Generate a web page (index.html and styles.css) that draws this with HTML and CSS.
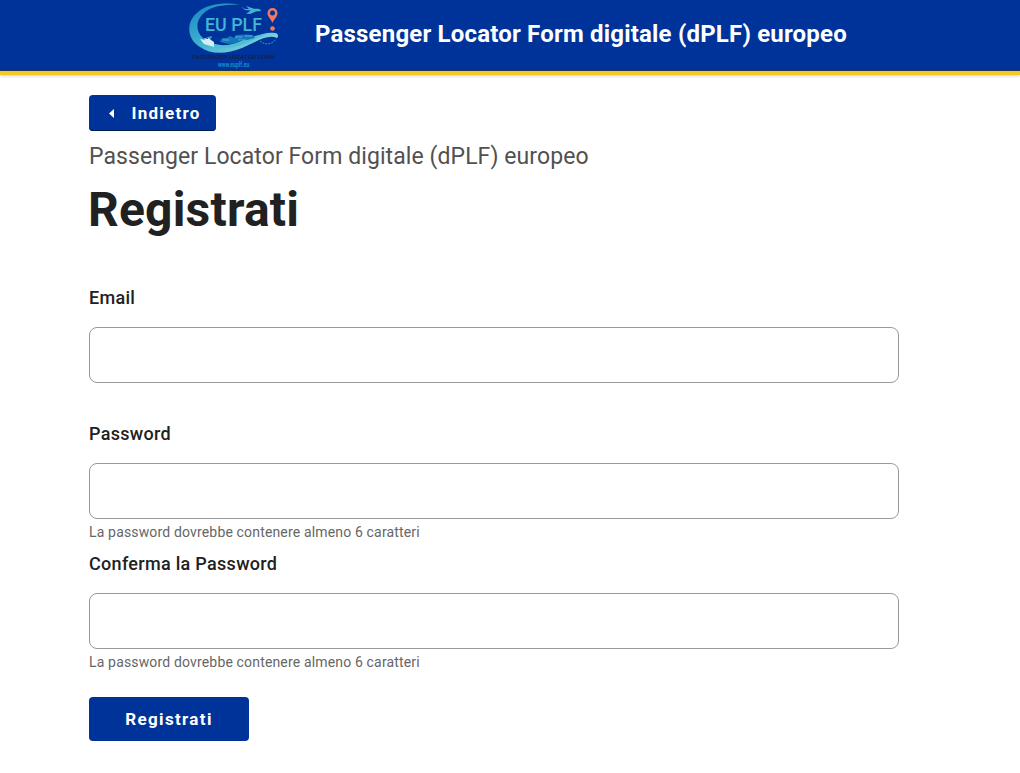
FILE: index.html
```html
<!DOCTYPE html>
<html lang="it">
<head>
<meta charset="utf-8">
<title>Registrati</title>
<link rel="stylesheet" href="styles.css">
</head>
<body>
<header class="topbar">
  <svg class="logo" viewBox="0 0 110 70" role="img" aria-label="EU PLF">
    <defs>
      <linearGradient id="wave" x1="0" y1="0" x2="1" y2="1">
        <stop offset="0" stop-color="#1583c5"/>
        <stop offset=".5" stop-color="#43b5cf"/>
        <stop offset="1" stop-color="#9de0ea"/>
      </linearGradient>
    </defs>
    <path d="M60 4.500C45 2.500 28 3.500 18 12C6 21 6 39 20 47C31 55 47 54 62 48C78 41 88 34 97 38C99 36 98 33 95 33C84 31 74 38 61 43C48 47 32 46 23 38C14 30 16 17 28 10C37 5 48 4.500 60 4.500Z" fill="url(#wave)"/>
    <path d="M22 42C32 48 46 47 61 41C71 36 82 34 88 34C79 36 73 41 64 44C48 50 31 50 22 42Z" fill="#50bfd5"/>
    <path d="M20 39L25 40L24 38L28 39L28 37L31 40L34 42L34 47L24 44Z" fill="#d5edf4"/>
    <path d="M26 37.500L32 36L31 39Z" fill="#389fcb"/>
    <path d="M40 42L42 38L47 38L50 36L54 38L56 35L66 34.500L73 35L75 38L67 40L60 40L57 43L49 44Z" fill="#1677bc"/>
    <path d="M43 40H49M55 37H62M65 36H72M58 40H66" stroke="#48b3d1" stroke-width="1.200" fill="none"/>
    <path d="M61 6.500L65 10L71 10.500L66 13.500L70 14L76 11.500L81 11C81 8.500 77 8.500 74 8.800L66 6L69 9L65 9Z" fill="#43b5d0"/>
    <path d="M80 41C85 46 93 44 96 39" stroke="#269fcd" stroke-width="1" stroke-dasharray="2 1" fill="none"/>
    <path d="M92.500 23C91 19 87.500 17 87.500 13A5 5 0 0 1 97.500 13C97.500 17 94 19 92.500 23ZM92.500 10.500A2.500 2.500 0 1 0 92.500 15.500A2.500 2.500 0 1 0 92.500 10.500Z" fill="#f17861" fill-rule="evenodd"/>
    <circle cx="92.500" cy="28.500" r="2.300" fill="#f17861"/>
    <text class="logo-name" x="25" y="31" textLength="57" lengthAdjust="spacingAndGlyphs">EU PLF</text>
    <text class="logo-caption" x="12" y="59" textLength="83" lengthAdjust="spacingAndGlyphs">PASSENGER LOCATOR FORM</text>
    <text class="logo-url" x="38" y="67" textLength="31" lengthAdjust="spacingAndGlyphs">www.euplf.eu</text>
  </svg>
  <span class="app-title">Passenger Locator Form digitale (dPLF) europeo</span>
</header>
<main class="content">
  <button class="btn btn-back" type="button">
    <svg class="caret" viewBox="0 0 5 9"><path d="M5 0V9L0 4.500Z" fill="currentColor"/></svg>
    <span>Indietro</span>
  </button>
  <p class="subtitle">Passenger Locator Form digitale (dPLF) europeo</p>
  <h1 class="heading">Registrati</h1>
  <form class="form">
    <div class="field field-email">
      <label class="label" for="email">Email</label>
      <input class="input" id="email" type="email">
    </div>
    <div class="field">
      <label class="label" for="password">Password</label>
      <input class="input" id="password" type="password">
      <p class="hint">La password dovrebbe contenere almeno 6 caratteri</p>
    </div>
    <div class="field">
      <label class="label" for="confirm">Conferma la Password</label>
      <input class="input" id="confirm" type="password">
      <p class="hint">La password dovrebbe contenere almeno 6 caratteri</p>
    </div>
    <button class="btn btn-submit" type="button">Registrati</button>
  </form>
</main>
</body>
</html>
```
FILE: styles.css
```css
* { box-sizing: border-box; }
body {
  margin: 0;
  background: #fff;
  color: #212121;
  font-family: Roboto, sans-serif;
}
.topbar {
  display: flex;
  align-items: flex-start;
  height: 75px;
  padding-left: 180px;
  background: #039;
  border-bottom: 4px solid #f5c925;
  box-shadow: inset 0 -1px #20334f, 0 1px 3px rgba(0, 0, 0, .2);
}
.logo { width: 110px; height: 70px; flex: none; }
.logo-name { font: 500 19px Roboto, sans-serif; fill: #42b6d2; }
.logo-caption { font: 700 5.5px Roboto, sans-serif; fill: #102451; }
.logo-url { font: 700 6.5px Roboto, sans-serif; fill: #178dc8; }
.app-title {
  margin-left: 25px;
  color: #fff;
  font-size: 24px;
  font-weight: 700;
  line-height: 68px;
  letter-spacing: .19px;
  white-space: nowrap;
}
.content { width: 899px; padding: 20px 0 0 89px; }
.btn {
  display: flex;
  align-items: center;
  border: 0;
  border-radius: 4px;
  background: #039;
  color: #fff;
  font: 700 17px/24px Roboto, sans-serif;
  letter-spacing: 1.25px;
}
.btn-back {
  width: 127px;
  height: 36px;
  padding: 0 0 0 20px;
  gap: 17.5px;
  box-shadow: inset 0 -1px #001b50;
}
.caret { width: 5px; height: 9px; }
.subtitle {
  margin: 9px 0 0;
  color: #515151;
  font-size: 23px;
  line-height: 34px;
  letter-spacing: .08px;
}
.heading {
  margin: 6px 0 0 -1px;
  font-size: 48px;
  font-weight: 700;
  line-height: 60px;
  letter-spacing: .2px;
}
.form { padding-top: 43px; }
.field { height: 130px; }
.field-email { height: 136px; }
.label {
  display: block;
  height: 44px;
  padding-top: 1px;
  font-size: 18px;
  font-weight: 500;
  line-height: 28px;
  letter-spacing: .3px;
}
.input {
  display: block;
  width: 810px;
  height: 56px;
  padding: 0 16px;
  border: 1px solid #999;
  border-radius: 8px;
  background: #fff;
  font: 16px Roboto, sans-serif;
}
.hint {
  margin: 3px 0 0;
  color: #666;
  font-size: 14px;
  line-height: 20px;
  letter-spacing: .16px;
}
.btn-submit {
  justify-content: center;
  width: 160px;
  height: 44px;
  margin-top: 18px;
  padding: 0;
  letter-spacing: 1.35px;
}
```
